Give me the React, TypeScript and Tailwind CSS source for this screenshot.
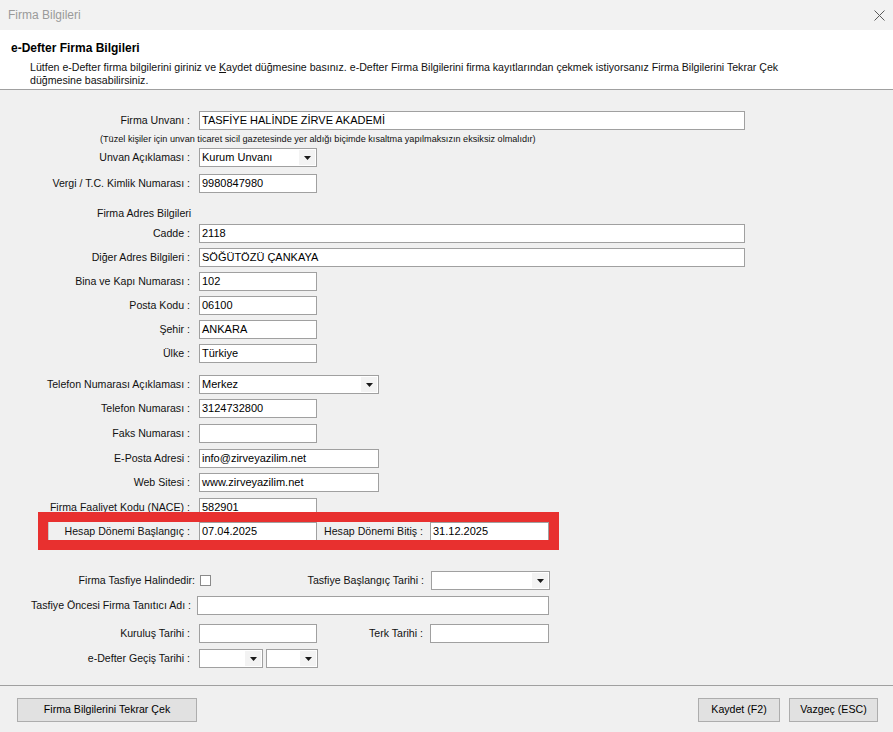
import type { ReactNode } from "react";

const FONT = "font-['Liberation_Sans',Arial,sans-serif]";

function Field({
  value = "",
  className = "",
}: {
  value?: string;
  className?: string;
}) {
  return (
    <div
      className={`flex h-[19px] shrink-0 items-center border border-[#a0a0a0] bg-white pl-[2px] text-[11px] text-black ${className}`}
    >
      <span className="whitespace-nowrap">{value}</span>
    </div>
  );
}

function Combo({
  value = "",
  className = "",
}: {
  value?: string;
  className?: string;
}) {
  return (
    <div
      className={`flex h-[19px] shrink-0 items-center border border-[#a0a0a0] bg-white text-[11px] text-black ${className}`}
    >
      <span className="flex-1 whitespace-nowrap pl-[2px]">{value}</span>
      <div className="mr-px flex h-[15px] w-[16px] items-center justify-center bg-[#f3f3f3]">
        <svg width="7" height="4" viewBox="0 0 7 4">
          <path d="M0 0h7L3.5 4z" fill="#1a1a1a" />
        </svg>
      </div>
    </div>
  );
}

function Label({
  children,
  className = "w-[190px]",
}: {
  children: ReactNode;
  className?: string;
}) {
  return (
    <span
      className={`shrink-0 whitespace-nowrap text-right text-[10.6px] text-[#111] ${className}`}
    >
      {children}
    </span>
  );
}

function Row({
  label,
  children,
  className = "mt-[5px]",
}: {
  label: string;
  children: ReactNode;
  className?: string;
}) {
  return (
    <div className={`flex h-[19px] items-center ${className}`}>
      <Label>{label}</Label>
      <div className="ml-[9px] flex items-center">{children}</div>
    </div>
  );
}

function Button({ children, className = "" }: { children: ReactNode; className?: string }) {
  return (
    <div
      className={`flex h-[24px] items-center justify-center border border-[#adadad] bg-[#e1e1e1] text-[10.6px] text-black ${className}`}
    >
      {children}
    </div>
  );
}

export default function App() {
  return (
    <div className={`flex h-[732px] w-[893px] flex-col overflow-hidden bg-[#f0f0f0] ${FONT}`}>
      {/* title bar */}
      <div className="flex h-[30px] shrink-0 items-center justify-between bg-[#f2f2f2] pl-[8px] pr-[8px]">
        <span className="text-[12px] text-[#9a9a9a]">Firma Bilgileri</span>
        <svg width="11" height="11" viewBox="0 0 11 11">
          <path d="M0.5 0.5l10 10M10.5 0.5l-10 10" stroke="#5a5a5a" strokeWidth="1" />
        </svg>
      </div>

      {/* header */}
      <div className="flex h-[60px] shrink-0 flex-col border-b border-[#a0a0a0] bg-white">
        <div className="mt-[9px] pl-[11px] text-[12px] font-bold text-black">
          e-Defter Firma Bilgileri
        </div>
        <div className="mt-[4px] whitespace-nowrap pl-[30px] text-[10.6px] leading-[13px] text-[#111]">
          Lütfen e-Defter firma bilgilerini giriniz ve <u>K</u>aydet düğmesine basınız. e-Defter
          Firma Bilgilerini firma kayıtlarından çekmek istiyorsanız Firma Bilgilerini Tekrar Çek
          <br />
          düğmesine basabilirsiniz.
        </div>
      </div>

      {/* form */}
      <div className="flex flex-1 flex-col pt-[21px]">
        <Row label="Firma Unvanı :" className="">
          <Field value="TASFİYE HALİNDE ZİRVE AKADEMİ" className="w-[546px]" />
        </Row>
        <div className="mt-[3px] h-[12px] whitespace-nowrap pl-[100px] text-[9.15px] leading-[12px] text-[#111]">
          (Tüzel kişiler için unvan ticaret sicil gazetesinde yer aldığı biçimde kısaltma yapılmaksızın eksiksiz olmalıdır)
        </div>
        <Row label="Unvan Açıklaması :" className="mt-[3px]">
          <Combo value="Kurum Unvanı" className="w-[118px]" />
        </Row>
        <Row label="Vergi / T.C. Kimlik Numarası :" className="mt-[7px]">
          <Field value="9980847980" className="w-[118px]" />
        </Row>

        <div className="mt-[14px] h-[13px] pl-[97px] text-[10.6px] leading-[13px] text-[#111]">
          Firma Adres Bilgileri
        </div>
        <Row label="Cadde :" className="mt-[4px]">
          <Field value="2118" className="w-[546px]" />
        </Row>
        <Row label="Diğer Adres Bilgileri :">
          <Field value="SÖĞÜTÖZÜ ÇANKAYA" className="w-[546px]" />
        </Row>
        <Row label="Bina ve Kapı Numarası :">
          <Field value="102" className="w-[118px]" />
        </Row>
        <Row label="Posta Kodu :">
          <Field value="06100" className="w-[118px]" />
        </Row>
        <Row label="Şehir :">
          <Field value="ANKARA" className="w-[118px]" />
        </Row>
        <Row label="Ülke :">
          <Field value="Türkiye" className="w-[118px]" />
        </Row>

        <Row label="Telefon Numarası Açıklaması :" className="mt-[12px]">
          <Combo value="Merkez" className="w-[180px]" />
        </Row>
        <Row label="Telefon Numarası :">
          <Field value="3124732800" className="w-[118px]" />
        </Row>
        <Row label="Faks Numarası :" className="mt-[6px]">
          <Field className="w-[118px]" />
        </Row>
        <Row label="E-Posta Adresi :" className="mt-[6px]">
          <Field value="info@zirveyazilim.net" className="w-[180px]" />
        </Row>
        <Row label="Web Sitesi :">
          <Field value="www.zirveyazilim.net" className="w-[180px]" />
        </Row>
        <Row label="Firma Faaliyet Kodu (NACE) :" className="mt-[6px]">
          <Field value="582901" className="w-[118px]" />
        </Row>

        {/* hesap dönemi group, highlighted */}
        <div className="relative ml-[48px] mt-[4px] flex h-[21px] w-[501px] items-center border border-[#c8c8c8]">
          <Label className="w-[141px]">Hesap Dönemi Başlangıç :</Label>
          <Field value="07.04.2025" className="ml-[9px] w-[118px]" />
          <Label className="w-[106px]">Hesap Dönemi Bitiş :</Label>
          <Field value="31.12.2025" className="ml-[7px] w-[119px]" />
          <div className="pointer-events-none absolute -bottom-[9px] -left-[11px] -right-[11px] -top-[10px] border-[10px] border-[#e8302f]" />
        </div>

        <div className="mt-[29px] flex h-[19px] items-center">
          <Label className="w-[195px]">Firma Tasfiye Halindedir:</Label>
          <div className="ml-[5px] h-[11px] w-[11px] border border-[#8a8a8a] bg-white" />
          <Label className="w-[213px]">Tasfiye Başlangıç Tarihi :</Label>
          <Combo className="ml-[7px] w-[119px]" />
        </div>
        <div className="mt-[6px] flex h-[19px] items-center">
          <Label className="w-[191px]">Tasfiye Öncesi Firma Tanıtıcı Adı :</Label>
          <Field className="ml-[6px] w-[352px]" />
        </div>
        <div className="mt-[9px] flex h-[19px] items-center">
          <Label className="w-[190px]">Kuruluş Tarihi :</Label>
          <Field className="ml-[9px] w-[118px]" />
          <Label className="w-[106px]">Terk Tarihi :</Label>
          <Field className="ml-[7px] w-[119px]" />
        </div>
        <Row label="e-Defter Geçiş Tarihi :" className="mt-[6px]">
          <Combo className="w-[64px]" />
          <Combo className="ml-[3px] w-[52px]" />
        </Row>
      </div>

      {/* footer */}
      <div className="flex h-[47px] shrink-0 items-start border-t border-[#a0a0a0] px-[15px] pt-[12px]">
        <Button className="ml-[2px] w-[180px]">Firma Bilgilerini Tekrar Çek</Button>
        <Button className="ml-auto w-[82px]">Kaydet (F2)</Button>
        <Button className="ml-[9px] w-[89px]">Vazgeç (ESC)</Button>
      </div>
    </div>
  );
}
